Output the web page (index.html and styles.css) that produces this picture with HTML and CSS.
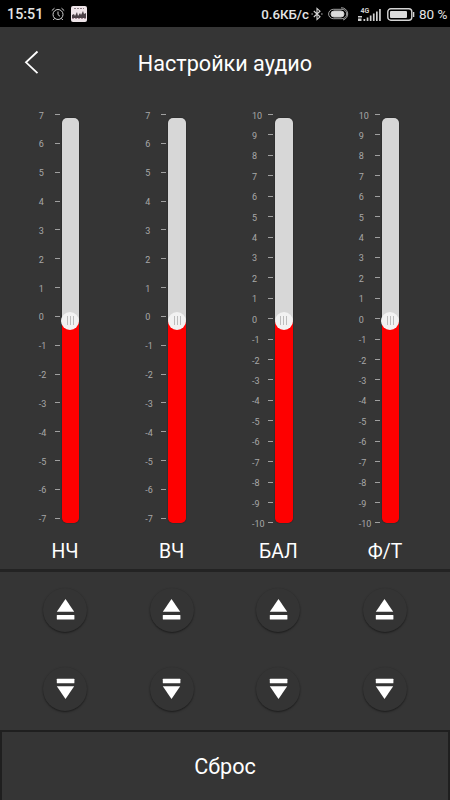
FILE: index.html
```html
<!DOCTYPE html>
<html lang="ru">
<head>
  <meta charset="utf-8">
  <title>Настройки аудио</title>
  <link rel="stylesheet" href="styles.css">
</head>
<body>
  <div class="status">
    <span class="time">15:51</span>
    <svg class="alarm" width="14" height="14" viewBox="0 0 14 14" fill="none" stroke="#d0d0d0">
      <circle cx="7" cy="7.5" r="5"/>
      <path d="M7 4.5v3.2l2 1.6M0.8 3.6L3.5 1.2M13.2 3.6L10.5 1.2M3.6 11.4L2.2 13M10.4 11.4L11.8 13"/>
    </svg>
    <svg class="app" width="16" height="16" viewBox="0 0 16 16">
      <rect width="16" height="16" rx="2" fill="#eee4e8"/>
      <path d="M3 2.5h10" stroke="#8d8087" stroke-dasharray="2 1"/>
      <path d="M1 12V9l2-1 1 2 2-4 1 4 2-3 1 2 2-4 1 3 2-1v5z" fill="#4a4046"/>
      <path d="M1 12.5h14" stroke="#a78e98" stroke-dasharray="2 1"/>
    </svg>
    <span class="speed">0.6КБ/с</span>
    <svg class="bt" width="12" height="14" viewBox="0 0 12 14" fill="none" stroke="#d6d6d6" stroke-width="1.1">
      <path d="M2.8 4L9 9.8 6 12.6V1.4L9 4.2 2.8 10"/>
      <path d="M0.5 7h1.3M10.2 7h1.3"/>
    </svg>
    <svg class="pill" width="21" height="14" viewBox="0 0 21 14" fill="none" stroke="#c8c8c8">
      <rect x="3" y="4" width="13" height="6" rx="3" fill="#dcdcdc"/>
      <path d="M13 .8a6.2 6.2 0 0 1 2 12.2M14 2.3H5.3a4.7 4.7 0 0 0 0 9.4H14a4.7 4.7 0 0 0 0-9.4" stroke-width=".8"/>
    </svg>
    <svg class="signal" width="24" height="15" viewBox="0 0 24 15" fill="#cfcfcf">
      <text x="2.5" y="6" font-size="7">4G</text>
      <path d="M0 9h4v1.5H0zM0 11.5h3.5V14H0zM5.5 12h1.7v2H5.5zM8.7 10.5h1.7V14H8.7zM11.8 8.5h1.7V14h-1.7zM14.9 6.5h1.7V14h-1.7zM18 4.5h1.7V14H18zM21.1 2h1.7v12h-1.7z"/>
    </svg>
    <svg class="battery" width="28" height="13" viewBox="0 0 28 13">
      <rect x=".8" y=".8" width="24" height="11.4" rx="3" fill="none" stroke="#d4d4d4" stroke-width="1.4"/>
      <rect x="3" y="3" width="17" height="7" rx="1" fill="#dadada"/>
      <path d="M26 4h1.3v5H26z" fill="#d4d4d4"/>
    </svg>
    <span class="percent">80 %</span>
  </div>

  <div class="header">
    <svg class="back" width="16" height="26" viewBox="0 0 16 26" fill="none" stroke="#fff" stroke-width="1.8">
      <path d="M13.5 2.5L2 13.3l11.5 10.9"/>
    </svg>
    <h1 class="title">Настройки аудио</h1>
  </div>

  <div class="sliders" id="sliders"></div>
  <div class="buttons" id="buttons"></div>
  <div class="reset">Сброс</div>

  <script>
    const channels = [
      { name: 'НЧ', max: 7 },
      { name: 'ВЧ', max: 7 },
      { name: 'БАЛ', max: 10 },
      { name: 'Ф/Т', max: 10 }
    ]

    const sliders = document.getElementById('sliders')
    const buttons = document.getElementById('buttons')

    channels.forEach(c => {
      let rows = ''
      for (let i = c.max; i >= -c.max; i--) {
        rows += `<div class="mark"><span class="num">${i}</span><span class="tick"></span></div>`
      }
      sliders.innerHTML += `
        <div class="channel">
          <div class="control">
            <div class="scale scale-${c.max}">${rows}</div>
            <div class="track"><div class="thumb"><i></i><i></i><i></i></div></div>
          </div>
          <div class="name">${c.name}</div>
        </div>`
    })

    const icons = {
      up: '<path d="M9.5 0L18.2 12.7H.8z"/><rect x=".8" y="16" width="17.6" height="4.4" rx=".5"/>',
      down: '<rect x=".8" y=".8" width="17.6" height="4.4" rx=".5"/><path d="M.8 8.2h17.4L9.5 21z"/>'
    }
    for (const dir in icons) {
      channels.forEach(() => {
        buttons.innerHTML += `<div class="btn"><svg width="19" height="22" viewBox="0 0 19 22">${icons[dir]}</svg></div>`
      })
    }
  </script>
</body>
</html>
```
FILE: styles.css
```css
* {
  box-sizing: border-box;
}

body {
  margin: 0;
  width: 450px;
  height: 800px;
  overflow: hidden;
  background-color: #353535;
  color: #fff;
  font-family: Roboto, "Noto Sans", sans-serif;
  display: flex;
  flex-direction: column;
}

.status {
  height: 27px;
  padding: 1px 3px 0 7px;
  background-color: #000;
  color: #e4e4e4;
  display: flex;
  align-items: center;
  white-space: nowrap;
}

.time {
  width: 37px;
  font-size: 14.3px;
  font-weight: 500;
}

.alarm {
  margin-left: 7px;
}

.app {
  margin-left: 6px;
}

.speed {
  margin-left: auto;
  font-size: 13.3px;
  font-weight: 500;
}

.bt {
  margin-left: 2px;
}

.pill {
  margin-left: 5px;
}

.signal {
  margin-left: 9px;
  font-weight: bold;
}

.battery {
  margin-left: 5px;
}

.percent {
  margin-left: 4px;
  width: 28px;
  font-size: 13.5px;
}

.header {
  height: 73px;
  display: grid;
  grid-template-columns: 60px 1fr 60px;
  align-items: center;
}

.back {
  margin-left: 24px;
  margin-bottom: 3px;
}

.title {
  margin: 0;
  font-size: 21.6px;
  font-weight: 400;
  text-align: center;
}

.sliders {
  height: 469px;
  padding: 10px 11.7px 0;
  display: grid;
  grid-template-columns: repeat(4, 1fr);
}

.control {
  height: 422px;
  padding-left: 27px;
  display: flex;
  align-items: flex-start;
}

.scale {
  width: 21px;
  display: flex;
  flex-direction: column;
  justify-content: space-between;
}

.scale-7 {
  height: 413px;
}

.scale-10 {
  height: 417.5px;
}

.mark {
  height: 9px;
  display: flex;
  justify-content: space-between;
  align-items: center;
}

.num {
  padding-top: 3px;
  font-size: 9px;
  line-height: 9px;
  color: #a8a8a8;
}

.tick {
  width: 5px;
  height: 1px;
  background-color: #a0a0a0;
}

.track {
  width: 17.5px;
  height: 405px;
  margin: 8px 0 0 2px;
  border-radius: 5px;
  background: linear-gradient(#d7d7d7 50%, #fe0000 50%);
  box-shadow: 0 0 1px #000;
  display: flex;
  justify-content: center;
  align-items: center;
}

.thumb {
  width: 18px;
  height: 18px;
  flex: none;
  border-radius: 50%;
  background-color: #f2f2f2;
  display: flex;
  justify-content: center;
  align-items: center;
  gap: 2px;
}

.thumb i {
  width: 1px;
  height: 9px;
  background-color: #bdbdbd;
}

.name {
  line-height: 40px;
  font-size: 19.4px;
  text-align: center;
}

.buttons {
  height: 161px;
  padding: 16px 11.7px 0;
  border-top: 3px solid #232323;
  display: grid;
  grid-template-columns: repeat(4, 1fr);
  grid-auto-rows: 44px;
  row-gap: 35px;
  justify-items: center;
}

.btn {
  width: 44px;
  height: 44px;
  border-radius: 50%;
  background-color: #343434;
  box-shadow: 0 1px 2px rgba(0, 0, 0, 0.5);
  display: flex;
  justify-content: center;
  align-items: center;
}

.btn svg {
  fill: #fff;
}

.reset {
  flex: 1;
  border: 2px solid #1f1f1f;
  border-bottom: none;
  display: flex;
  justify-content: center;
  align-items: center;
  font-size: 21.6px;
}
```
